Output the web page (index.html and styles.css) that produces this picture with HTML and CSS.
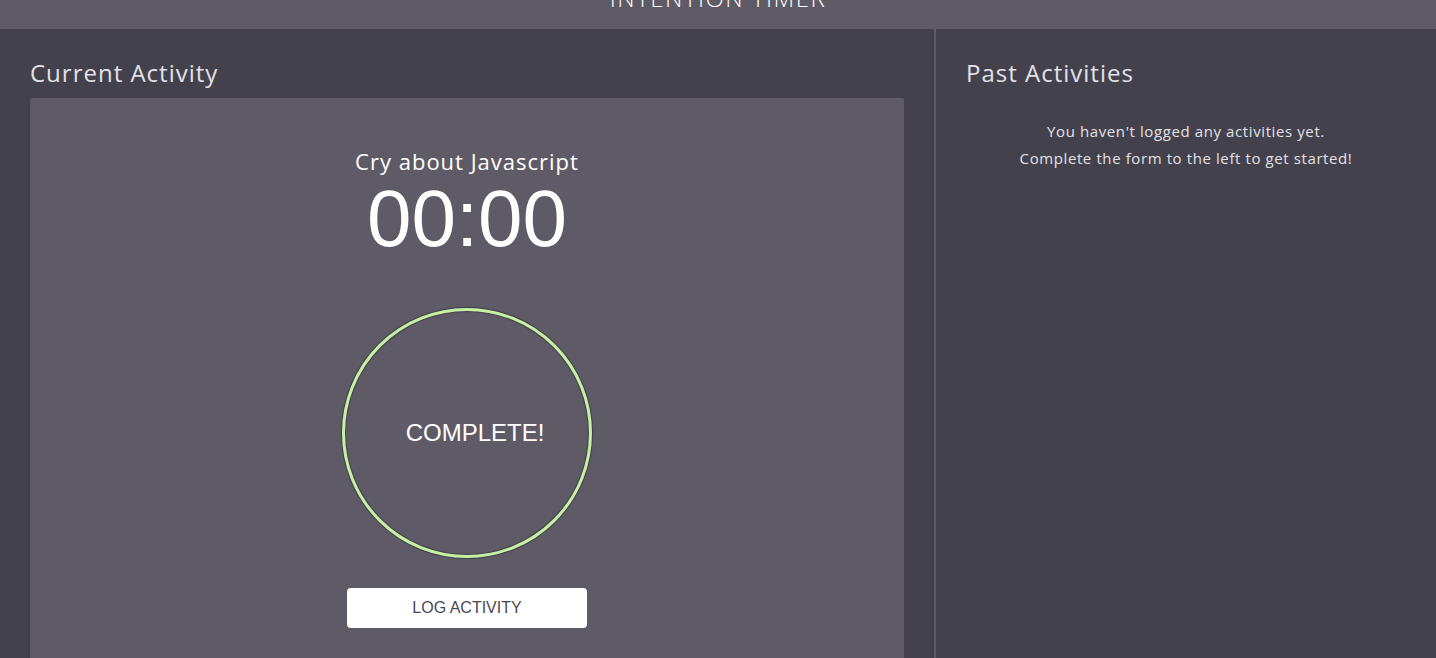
FILE: index.html
```html
<!DOCTYPE html>
<html lang="en">
<head>
<meta charset="utf-8">
<title>Intention Timer</title>
<link rel="stylesheet" href="styles.css">
</head>
<body>
<header class="top">
  <h1 class="title">INTENTION TIMER</h1>
</header>
<main class="layout">
  <section class="current">
    <h2 class="heading">Current Activity</h2>
    <div class="card">
      <p class="activity">Cry about Javascript</p>
      <p class="clock">00:00</p>
      <div class="ring"><span class="ring-label">COMPLETE!</span></div>
      <button class="log-btn">LOG ACTIVITY</button>
    </div>
  </section>
  <aside class="past">
    <h2 class="heading">Past Activities</h2>
    <p class="empty">You haven't logged any activities yet.<br>Complete the form to the left to get started!</p>
  </aside>
</main>
</body>
</html>
```
FILE: styles.css
```css
* { box-sizing: border-box; }
html, body { margin: 0; height: 100%; }
body {
  background: #43424c;
  font-family: "Open Sans", "Noto Sans", sans-serif;
  color: #ece9f0;
  overflow: hidden;
}
.top {
  height: 29px;
  background: #5f5b66;
  overflow: hidden;
  display: flex;
  justify-content: center;
}
.title {
  margin: -16px 0 0;
  font-size: 24px;
  font-weight: 300;
  letter-spacing: 1.5px;
  line-height: 28px;
  color: #ffffff;
}
.layout {
  display: flex;
  height: calc(100% - 29px);
}
.current {
  width: 934px;
  padding: 28px 30px 0;
  display: flex;
  flex-direction: column;
}
.past {
  flex: 1;
  border-left: 2px solid #5f5b66;
  padding: 28px 30px 0;
}
.heading {
  margin: 0;
  font-size: 24px;
  font-weight: 400;
  letter-spacing: 1px;
  line-height: 32px;
  color: #e3e0e8;
}
.current .heading { margin-bottom: 9px; }
.card {
  flex: 1;
  background: #5f5b66;
  border-radius: 2px 2px 0 0;
  display: flex;
  flex-direction: column;
  align-items: center;
  padding-top: 48px;
}
.activity {
  margin: 0;
  font-size: 22px;
  letter-spacing: 1px;
  line-height: 30px;
  color: #ffffff;
}
.clock {
  margin: -2px 0 0;
  font-family: "Liberation Sans", Arial, sans-serif;
  font-size: 80px;
  line-height: 90px;
  color: #ffffff;
}
.ring {
  margin-top: 44px;
  width: 250px;
  height: 250px;
  border-radius: 50%;
  border: 3px solid #c7f0a5;
  box-shadow: 0 0 1px 1px rgba(40, 38, 50, 0.6), inset 0 0 1px 1px rgba(40, 38, 50, 0.5);
  display: flex;
  align-items: center;
  justify-content: center;
  padding-left: 16px;
}
.ring-label {
  font-family: "Liberation Sans", Arial, sans-serif;
  font-size: 24px;
  color: #ffffff;
}
.log-btn {
  margin-top: 30px;
  width: 240px;
  height: 40px;
  border: none;
  border-radius: 4px;
  background: #ffffff;
  font-family: "Liberation Sans", Arial, sans-serif;
  font-size: 16px;
  color: #4a4752;
}
.empty {
  margin: 29px 0 0;
  text-align: center;
  font-size: 15px;
  letter-spacing: 0.6px;
  line-height: 27px;
  color: #e3e0e8;
}
```
